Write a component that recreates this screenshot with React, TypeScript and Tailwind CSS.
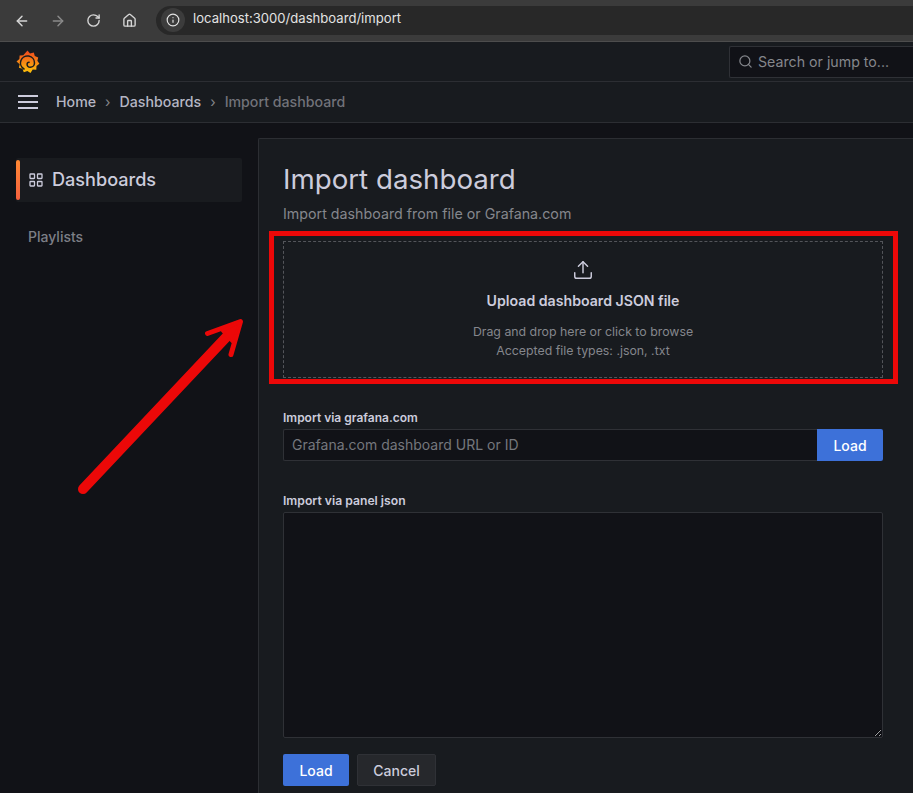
import { ArrowLeft, ArrowRight, RotateCw, Home, Info, Search, Upload } from "lucide-react";

function GrafanaLogo() {
  return (
    <svg width="24" height="26" viewBox="0 0 24 26" className="mt-[2px]">
      <defs>
        <linearGradient id="grafana" x1="0" y1="1" x2="0" y2="0">
          <stop offset="0" stopColor="#fcc30a" />
          <stop offset="1" stopColor="#f0461f" />
        </linearGradient>
      </defs>
      <path
        d="M11.500 0.500l2.500 3 3.800-1 1 3.500 3.400 1.500-.8 3.300 2 2.900-2.900 2.200-.2 3.800-3.600-.2-2.200 3.400-3.100-1.800-3.600 1.200-1.300-3.500-3.600-1 .8-3.600L.500 11.500l2.900-2.400.2-3.700 3.700-.2z"
        fill="url(#grafana)"
      />
      <path
        d="M8 19a7 7 0 1 1 10.500-6 4.300 4.300 0 0 1-4.300 4.300 3 3 0 0 1-3.100-3.100 2 2 0 0 1 2-2"
        fill="none"
        stroke="#181b1f"
        strokeWidth="1.500"
        strokeLinecap="round"
      />
    </svg>
  );
}

function BrowserBar() {
  return (
    <div className="flex h-[42px] items-center border-b border-[#4d4d4d] bg-[#3b3b3b]">
      <div className="flex w-[156px] shrink-0 items-center text-[#d5d5d5]">
        <ArrowLeft size={16} strokeWidth={2.200} className="ml-[14px]" />
        <ArrowRight size={16} strokeWidth={2.200} className="ml-[20px] text-[#8a8a8a]" />
        <RotateCw size={15} strokeWidth={2.200} className="ml-[20px]" />
        <Home size={15} strokeWidth={2.200} className="ml-[21px]" />
      </div>
      <div className="mb-[1px] flex h-[29px] flex-1 items-center rounded-l-full bg-[#282828] pl-[5px]">
        <span className="flex h-6 w-6 items-center justify-center rounded-full bg-[#3c3c3c]">
          <Info size={14} className="text-[#e3e3e3]" />
        </span>
        <span className="mb-[2px] ml-2 text-[13.1px] text-[#e3e3e3]">localhost:3000/dashboard/import</span>
      </div>
    </div>
  );
}

function TopBar() {
  return (
    <div className="flex h-[40px] items-center justify-between border-b border-[#2c2e33] bg-[#181b1f] pl-[16px]">
      <GrafanaLogo />
      <div className="flex h-[32px] w-[184px] items-center gap-[5px] rounded-l-[2px] border border-r-0 border-[#2f3136] bg-[#111217] pl-[8px] text-[14.2px] text-[#85878c]">
        <Search size={15} />
        <span>Search or jump to...</span>
      </div>
    </div>
  );
}

function Breadcrumbs() {
  return (
    <div className="flex h-[41px] items-center border-b border-[#2c2e33] bg-[#181b1f] pl-[18px] text-[14.2px]">
      <span className="flex w-5 flex-col gap-[4px]">
        <span className="h-[2px] bg-[#ccccdc]" />
        <span className="h-[2px] bg-[#ccccdc]" />
        <span className="h-[2px] bg-[#ccccdc]" />
      </span>
      <span className="ml-[18px] font-medium text-[#b5b6c4]">Home</span>
      <span className="mx-[9px] text-[#85878c]">›</span>
      <span className="font-medium text-[#b5b6c4]">Dashboards</span>
      <span className="mx-[9px] text-[#85878c]">›</span>
      <span className="font-medium text-[#717279]">Import dashboard</span>
    </div>
  );
}

function Sidebar() {
  return (
    <div className="w-[258px] shrink-0 pt-[35px]">
      <div className="ml-[16px] flex h-[44px] w-[226px] items-center rounded-[2px] bg-[#191b1f]">
        <span className="h-[40px] w-[4px] rounded-[2px] bg-gradient-to-b from-[#ff8833] to-[#f55f3e]" />
        <svg width="14" height="14" viewBox="0 0 14 14" className="ml-[9px]" fill="none" stroke="#ccccdc" strokeWidth="1.300">
          <rect x="1" y="1" width="4.500" height="4.500" rx="0.500" />
          <rect x="8.500" y="1" width="4.500" height="4.500" rx="0.500" />
          <rect x="1" y="8.500" width="4.500" height="4.500" rx="0.500" />
          <rect x="8.500" y="8.500" width="4.500" height="4.500" rx="0.500" />
        </svg>
        <span className="mb-[1px] ml-[9px] text-[18.1px] font-medium text-[#ccccdc]">Dashboards</span>
      </div>
      <div className="mt-[24px] pl-[28px] text-[14px] font-medium text-[#7d7f86]">Playlists</div>
    </div>
  );
}

function ImportPanel() {
  return (
    <div className="mt-[15px] min-w-0 flex-1 rounded-tl-[2px] border-t border-l border-[#2c2e33] bg-[#181b1f] pt-[20px] pl-[24px]">
      <h1 className="text-[27.7px] leading-[40px] font-normal text-[#ccccdc]">Import dashboard</h1>
      <p className="mt-[5px] text-[14.25px] leading-[20px] text-[#85878d]">Import dashboard from file or Grafana.com</p>

      <div className="mt-[17px] flex h-[137px] w-[600px] flex-col items-center border border-dashed border-[#53555a]">
        <Upload size={22} strokeWidth={1.600} className="mt-[17px] text-[#ccccdc]" />
        <span className="mt-[10px] text-[14.15px] leading-[20px] font-semibold text-[#ccccdc]">Upload dashboard JSON file</span>
        <span className="mt-[11px] text-[12.33px] leading-[19px] text-[#85878d]">Drag and drop here or click to browse</span>
        <span className="text-[12.33px] leading-[19px] text-[#85878d]">Accepted file types: .json, .txt</span>
      </div>

      <label className="mt-[32px] block text-[12px] leading-[16px] font-semibold text-[#ccccdc]">Import via grafana.com</label>
      <div className="mt-[3px] flex h-[32px] w-[600px]">
        <div className="flex flex-1 items-center rounded-l-[2px] border border-r-0 border-[#2f3136] bg-[#111217] pb-[1px] pl-[8px] text-[14px] text-[#75777d]">
          Grafana.com dashboard URL or ID
        </div>
        <button className="w-[66px] rounded-r-[2px] bg-[#3d71d9] text-[14px] font-medium text-white">Load</button>
      </div>

      <label className="mt-[32px] block text-[12.2px] leading-[16px] font-semibold text-[#ccccdc]">Import via panel json</label>
      <textarea className="mt-[3px] block h-[226px] w-[600px] rounded-[2px] border border-[#2f3136] bg-[#111217] text-[14px] outline-none" />

      <div className="mt-[16px] flex gap-[8px]">
        <button className="h-[32px] w-[66px] rounded-[2px] bg-[#3d71d9] text-[14px] font-medium text-white">Load</button>
        <button className="h-[32px] w-[79px] rounded-[2px] border border-[#2f3136] bg-[#26282c] text-[14px] font-medium text-[#ccccdc]">Cancel</button>
      </div>
    </div>
  );
}

export default function App() {
  return (
    <div className="relative flex h-[793px] w-[913px] flex-col overflow-hidden bg-[#111217] font-['Inter',sans-serif]">
      <BrowserBar />
      <TopBar />
      <Breadcrumbs />
      <div className="flex flex-1">
        <Sidebar />
        <ImportPanel />
      </div>

      {/* annotation on top of the screenshot */}
      <div className="pointer-events-none absolute top-[231px] left-[269px] h-[153px] w-[629px] border-[5px] border-[#ec0808]" />
      <svg className="pointer-events-none absolute top-0 left-0" width="913" height="793" fill="none" stroke="#ec0808" strokeLinecap="round" strokeLinejoin="round">
        <path d="M83 489L233 330" strokeWidth="10" />
        <path d="M207.500 333.500L240.500 321.500L231 354.500" strokeWidth="5" />
        <path d="M240 322L222 331L232 342Z" fill="#ec0808" strokeWidth="2" />
      </svg>
    </div>
  );
}
